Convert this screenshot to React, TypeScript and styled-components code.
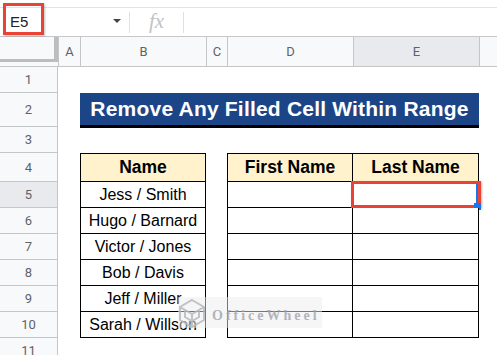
import styled, { createGlobalStyle } from 'styled-components';

const GlobalStyle = createGlobalStyle`
  html, body {
    margin: 0;
    padding: 0;
    background: #fff;
    overflow: hidden;
  }
  body {
    font-family: 'Liberation Sans', Arial, sans-serif;
  }
`;

const Page = styled.div`
  width: 497px;
  height: 355px;
  overflow: hidden;
  background: #fff;
`;

/* ---------- formula bar ---------- */

const FormulaBar = styled.div`
  height: 37px;
  padding-top: 7px;
  box-sizing: border-box;
`;

const BarInner = styled.div`
  display: flex;
  align-items: center;
  height: 30px;
  box-sizing: border-box;
  border-top: 1px solid #e3e3e3;
  border-bottom: 1px solid #c7c7c7;
`;

const NameBox = styled.div`
  position: relative;
  display: flex;
  align-items: center;
  width: 129px;
  height: 100%;
  padding: 0 8px 2px 10px;
  box-sizing: border-box;
  font-size: 15px;
  color: #202124;
`;

const Caret = styled.span`
  margin-left: auto;
  width: 0;
  height: 0;
  border-left: 4.5px solid transparent;
  border-right: 4.5px solid transparent;
  border-top: 4.5px solid #444;
`;

const Mark = styled.div`
  position: absolute;
  top: -5px;
  left: 3px;
  width: 41px;
  height: 32px;
  box-sizing: border-box;
  border: 3px solid #ea4335;
  box-shadow: 1px 1px 2px rgba(0, 0, 0, 0.25);
`;

const Divider = styled.span`
  width: 1px;
  height: 21px;
  background: #e0e0e0;
`;

const Fx = styled.span`
  width: 53px;
  text-align: center;
  font-family: 'Liberation Serif', 'Times New Roman', serif;
  font-style: italic;
  font-size: 21px;
  color: #c2c2c2;
  padding-bottom: 2px;
`;

/* ---------- sheet grid ---------- */

const Sheet = styled.div`
  position: relative;
  display: grid;
  grid-template-columns: 58px 22px 126px 21px 126px 126px 1fr;
  grid-template-rows: 30px 26px 34px 26px 29px repeat(6, 26px) 26px;
`;

const Corner = styled.div`
  background: #f8f9fa;
  border-bottom: 1px solid #c4c7c5;
  box-sizing: border-box;
`;

const FreezeBar = styled.div`
  height: 25px;
  box-sizing: border-box;
  border-right: 4px solid #bdbdbd;
  border-bottom: 3px solid #bdbdbd;
`;

const ColHeader = styled.div<{ $active?: boolean }>`
  display: flex;
  align-items: center;
  justify-content: center;
  background: ${(p) => (p.$active ? '#e8eaed' : '#f8f9fa')};
  border-left: 1px solid #c4c7c5;
  border-bottom: 1px solid #c4c7c5;
  box-sizing: border-box;
  font-family: Roboto, 'Liberation Sans', sans-serif;
  font-size: 13px;
  color: #5f6368;
`;

const RowHeader = styled.div<{ $active?: boolean }>`
  display: flex;
  align-items: center;
  justify-content: center;
  background: ${(p) => (p.$active ? '#e8eaed' : '#f8f9fa')};
  border-right: 1px solid #c4c7c5;
  border-bottom: 1px solid #c4c7c5;
  box-sizing: border-box;
  font-family: Roboto, 'Liberation Sans', sans-serif;
  font-size: 13px;
  color: #5f6368;
`;

const Blank = styled.div``;

const Title = styled.div`
  grid-column: span 4;
  height: 35px;
  display: flex;
  align-items: center;
  justify-content: center;
  background: #1c4587;
  border-bottom: 3px solid #000;
  box-sizing: border-box;
  color: #fff;
  font-weight: 700;
  font-size: 21px;
  letter-spacing: 0.2px;
  white-space: nowrap;
`;

const TableCell = styled.div<{ $head?: boolean; $left?: boolean; $top?: boolean }>`
  position: relative;
  display: flex;
  align-items: center;
  justify-content: center;
  box-sizing: border-box;
  border-right: 1px solid #000;
  border-bottom: 1px solid #000;
  border-left: ${(p) => (p.$left ? '1px solid #000' : 'none')};
  border-top: ${(p) => (p.$top ? '1px solid #000' : 'none')};
  background: ${(p) => (p.$head ? '#fff2cc' : '#fff')};
  font-weight: ${(p) => (p.$head ? 700 : 400)};
  font-size: ${(p) => (p.$head ? '17.5px' : '16px')};
  color: #000;
  white-space: nowrap;
`;

const Selection = styled.div`
  position: absolute;
  inset: -1px 0 0 -1px;
  border: 2px solid #1a73e8;
`;

const CellMark = styled.div`
  position: absolute;
  top: -1px;
  left: -2px;
  right: -3px;
  bottom: -1px;
  border: 3px solid #ea4335;
  box-shadow: 1px 1px 2px rgba(0, 0, 0, 0.3);
`;

const FillHandle = styled.div`
  position: absolute;
  right: -3px;
  bottom: -3px;
  width: 7px;
  height: 7px;
  background: #1a73e8;
`;

/* ---------- watermark ---------- */

const Watermark = styled.div`
  position: absolute;
  top: 260px;
  left: 178px;
  width: 144px;
  height: 31px;
  display: flex;
  align-items: center;
  gap: 6px;
  background: rgba(238, 238, 238, 0.55);
  opacity: 0.9;
`;

const WatermarkText = styled.span`
  font-family: 'Liberation Serif', 'Times New Roman', serif;
  font-size: 14px;
  font-weight: 700;
  letter-spacing: 3px;
  color: #a9adb3;
  padding-top: 6px;
`;

function Logo() {
  return (
    <svg width="28" height="30" viewBox="0 0 28 30" fill="none" stroke="#b9bdc2" strokeWidth="2">
      <polygon points="14,2 26,9 26,22 14,29 2,22 2,9" />
      <polyline points="2,9 14,16 26,9" />
      <line x1="14" y1="16" x2="14" y2="29" />
      <polyline points="7,12 7,19 14,23 21,19 21,12" />
    </svg>
  );
}

const columns = ['A', 'B', 'C', 'D', 'E'];

const names = [
  'Jess / Smith',
  'Hugo / Barnard',
  'Victor / Jones',
  'Bob / Davis',
  'Jeff / Miller',
  'Sarah / Willson',
];

function renderRow(n: number) {
  const header = (
    <RowHeader key={`h${n}`} $active={n === 5}>
      {n}
    </RowHeader>
  );

  if (n === 2) {
    return [
      header,
      <Blank key="2a" />,
      <Title key="2t">Remove Any Filled Cell Within Range</Title>,
      <Blank key="2f" />,
    ];
  }

  if (n === 4) {
    return [
      header,
      <Blank key="4a" />,
      <TableCell key="4b" $head $left $top>Name</TableCell>,
      <Blank key="4c" />,
      <TableCell key="4d" $head $left $top>First Name</TableCell>,
      <TableCell key="4e" $head $top>Last Name</TableCell>,
      <Blank key="4f" />,
    ];
  }

  if (n >= 5 && n <= 10) {
    return [
      header,
      <Blank key={`${n}a`} />,
      <TableCell key={`${n}b`} $left>{names[n - 5]}</TableCell>,
      <Blank key={`${n}c`} />,
      <TableCell key={`${n}d`} $left />,
      <TableCell key={`${n}e`}>
        {n === 5 && (
          <>
            <Selection />
            <CellMark />
            <FillHandle />
          </>
        )}
      </TableCell>,
      <Blank key={`${n}f`} />,
    ];
  }

  return [header, ...[0, 1, 2, 3, 4, 5].map((i) => <Blank key={`${n}-${i}`} />)];
}

export default function App() {
  return (
    <Page>
      <GlobalStyle />
      <FormulaBar>
        <BarInner>
          <NameBox>
            E5
            <Caret />
            <Mark />
          </NameBox>
          <Divider />
          <Fx>fx</Fx>
          <Divider />
        </BarInner>
      </FormulaBar>

      <Sheet>
        <Corner>
          <FreezeBar />
        </Corner>
        {columns.map((c) => (
          <ColHeader key={c} $active={c === 'E'}>
            {c}
          </ColHeader>
        ))}
        <ColHeader />

        {Array.from({ length: 11 }, (_, i) => renderRow(i + 1))}

        <Watermark>
          <Logo />
          <WatermarkText>OfficeWheel</WatermarkText>
        </Watermark>
      </Sheet>
    </Page>
  );
}
